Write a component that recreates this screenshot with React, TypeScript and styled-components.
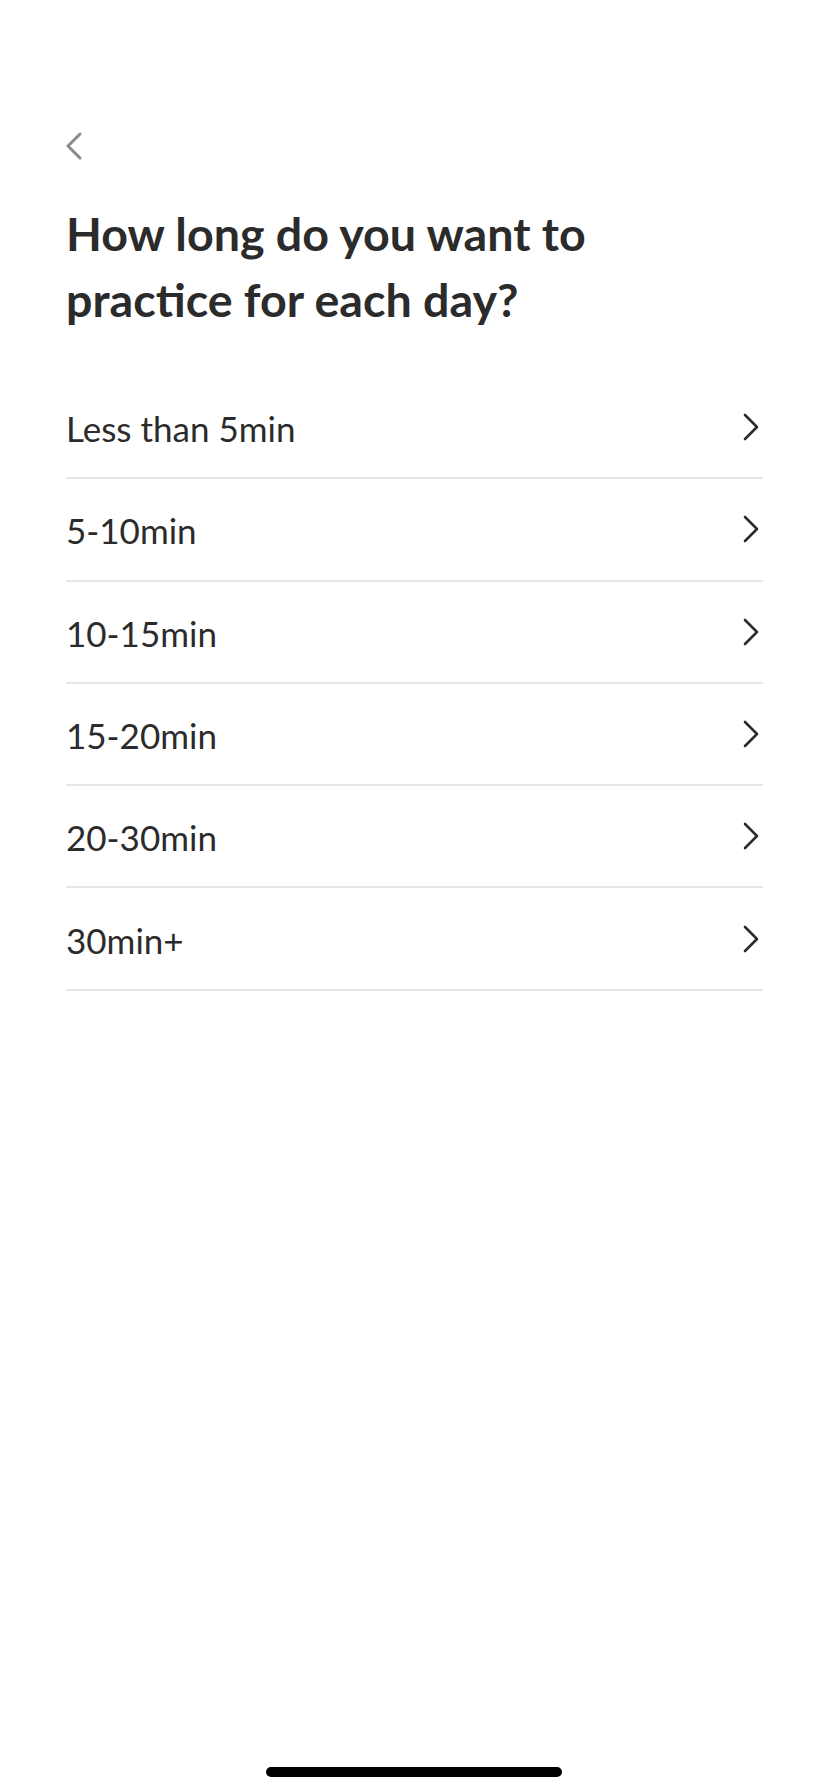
import * as React from 'react';
import styled, { createGlobalStyle } from 'styled-components';

const GlobalStyle = createGlobalStyle`
  html, body {
    margin: 0;
    padding: 0;
    background: #ffffff;
  }
  * {
    box-sizing: border-box;
  }
`;

const options = ['Less than 5min', '5-10min', '10-15min', '15-20min', '20-30min', '30min+'];

const BackIcon = () => (
  <svg width="18" height="30" viewBox="0 0 18 30" fill="none">
    <path d="M15 3 L3 15 L15 27" stroke="#8a8a8a" strokeWidth="3" strokeLinecap="round" strokeLinejoin="round" />
  </svg>
);

const ChevronIcon = () => (
  <svg width="18" height="28" viewBox="0 0 18 28" fill="none">
    <path d="M3 2 L15 14 L3 26" stroke="#2b2b2b" strokeWidth="2.6" strokeLinecap="round" strokeLinejoin="round" />
  </svg>
);

const App = () => {
  return (
    <Page>
      <GlobalStyle />
      <Content>
        <Header.BackButton aria-label="Back">
          <BackIcon />
        </Header.BackButton>
        <Header.Title>
          How long do you want to
          <br />
          practice for each day?
        </Header.Title>
        <List.Container>
          {options.map((label) => (
            <List.Row key={label}>
              <List.Label>{label}</List.Label>
              <ChevronIcon />
            </List.Row>
          ))}
        </List.Container>
      </Content>
      <HomeIndicator />
    </Page>
  );
};

export default App;

const Page = styled.div`
  min-height: 1792px;
  display: flex;
  flex-direction: column;
  background: #ffffff;
  font-family: Lato, 'Noto Sans', sans-serif;
  color: #2b2b2b;
`;

const Content = styled.div`
  padding: 131px 65px 0 66px;
`;

const Header = {
  BackButton: styled.button`
    display: block;
    width: 18px;
    height: 30px;
    padding: 0;
    margin: 0 0 0 -1px;
    border: none;
    background: none;
    cursor: pointer;
  `,

  Title: styled.h1`
    margin: 39px 0 0 0;
    font-size: 46.6px;
    line-height: 66px;
    font-weight: 700;
    letter-spacing: 0;
    color: #2b2b2b;
  `,
};

const List = {
  Container: styled.div`
    margin-top: 45px;
    display: flex;
    flex-direction: column;
  `,

  Row: styled.div`
    height: 102.3px;
    display: flex;
    align-items: center;
    justify-content: space-between;
    padding-right: 3px;
    border-bottom: 2px solid #e6e6e6;
    cursor: pointer;
  `,

  Label: styled.span`
    font-size: 35px;
    font-weight: 400;
    color: #2b2b2b;
    padding-top: 2px;
  `,
};

const HomeIndicator = styled.div`
  margin: auto auto 15px;
  width: 296px;
  height: 10px;
  border-radius: 5px;
  background: #000000;
`;
